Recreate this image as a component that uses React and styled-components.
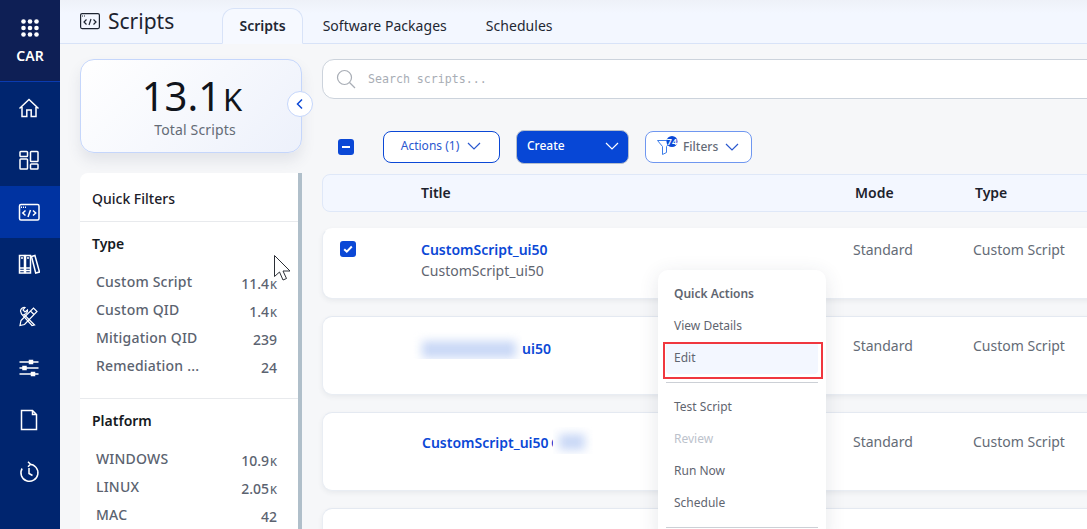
import React from 'react'
import styled, { createGlobalStyle } from 'styled-components'

const GlobalStyle = createGlobalStyle`
  html, body {
    margin: 0;
    padding: 0;
    height: 100%;
    overflow: hidden;
    background: #f6f7f9;
    font-family: 'Noto Sans', 'Open Sans', sans-serif;
  }
  *, *::before, *::after { box-sizing: border-box; }
`

const AppWrapper = styled.div`
  display: grid;
  grid-template-columns: 60px 1fr;
  width: 1087px;
  height: 529px;
  overflow: hidden;
  position: relative;
`

const Sidebar = styled.nav`
  display: flex;
  flex-direction: column;
  background: #00256f;
  height: 529px;
`

const Brand = styled.div`
  height: 82px;
  background: #0e1f55;
  border-bottom: 1px solid #0a3bb0;
  display: flex;
  flex-direction: column;
  align-items: center;
  padding-top: 19px;
  gap: 10px;
  color: #fff;
  font-size: 14px;
  font-weight: 600;
  line-height: 18px;
`

const NavItem = styled.div`
  height: 52px;
  padding-right: 2px;
  display: flex;
  align-items: center;
  justify-content: center;
  background: ${({ $active }) => ($active ? '#0033a1' : 'transparent')};
  color: #fff;
`

const Main = styled.div`
  display: flex;
  flex-direction: column;
  min-width: 0;
`

const Header = styled.header`
  height: 44px;
  display: flex;
  align-items: flex-end;
  padding-left: 20px;
  background: linear-gradient(180deg, #eef1f8 0%, #f3f7ff 30%);
  border-bottom: 1px solid #d8e3f8;
`

const PageTitle = styled.div`
  width: 142px;
  align-self: flex-start;
  height: 43px;
  display: flex;
  align-items: flex-start;
  gap: 8px;
  padding-top: 6px;
  font-size: 21px;
  line-height: 30px;
  color: #1d2430;

  svg { margin-top: 7px; }
`

const Tabs = styled.div`
  display: flex;
  align-items: flex-end;
  height: 36px;
  margin-bottom: -1px;
`

const Tab = styled.div`
  height: 36px;
  padding: 0 ${({ $active }) => ($active ? '16.5px' : '18.5px')} 2px;
  display: flex;
  align-items: center;
  font-size: 14px;
  letter-spacing: ${({ $active }) => ($active ? '0' : '0.04px')};
  font-weight: ${({ $active }) => ($active ? 600 : 400)};
  color: #1f2733;
  background: ${({ $active }) => ($active ? '#f6f9ff' : 'transparent')};
  border: 1px solid ${({ $active }) => ($active ? '#d8e3f8' : 'transparent')};
  border-bottom: 1px solid ${({ $active }) => ($active ? '#f6f9ff' : 'transparent')};
  border-radius: 12px 12px 0 0;
`

const Body = styled.div`
  display: flex;
  gap: 20px;
  padding: 15px 0 0 20px;
  flex: 1;
  min-height: 0;
`

const LeftColumn = styled.aside`
  width: 222px;
  flex: none;
  display: flex;
  flex-direction: column;
  gap: 20px;
`

const TotalCard = styled.div`
  position: relative;
  height: 94px;
  display: flex;
  flex-direction: column;
  align-items: center;
  padding-top: 11px;
  border: 1px solid #c5d6fb;
  border-radius: 14px;
  background: linear-gradient(135deg, #ffffff 0%, #f6f8fd 50%, #edf1fb 100%);
  box-shadow: 0 8px 14px rgba(60, 70, 100, 0.1);
`

const TotalValue = styled.div`
  font-size: 40px;
  line-height: 50px;
  height: 50px;
  padding-left: 2px;
  color: #10141c;

  span { font-size: 31px; margin-left: 2px; }
`

const TotalLabel = styled.div`
  margin-left: 8px;
  font-size: 14px;
  line-height: 18px;
  letter-spacing: 0.15px;
  color: #646b76;
`

const CollapseButton = styled.div`
  position: absolute;
  right: -12px;
  top: 31px;
  width: 26px;
  height: 26px;
  border-radius: 50%;
  display: flex;
  align-items: center;
  justify-content: center;
  background: #fff;
  border: 1px solid #c5d6fb;
  color: #0b48d6;
`

const FilterPanel = styled.div`
  flex: 1;
  min-height: 0;
  overflow: hidden;
  background: #fff;
  border-right: 4px solid #b0bfca;
  border-radius: 8px 0 0 0;
`

const FilterTitle = styled.div`
  height: 49px;
  padding: 16px 12px 0;
  font-size: 14px;
  line-height: 20px;
  font-weight: 500;
  color: #1b2029;
  border-bottom: 1px solid #e8eaed;
`

const FilterSection = styled.section`
  height: ${({ $height }) => $height};
  padding: 12px 12px 0;
  border-bottom: 1px solid #e8eaed;

  &:last-child { border-bottom: none; }
`

const FilterHeading = styled.div`
  font-size: 14px;
  line-height: 20px;
  font-weight: 600;
  color: #151a22;
  margin-bottom: 18px;
`

const FilterRow = styled.div`
  display: flex;
  justify-content: space-between;
  height: 28px;
  padding: 0 9px 0 4px;
  font-size: 14px;
  line-height: 20px;
  font-weight: 500;
  letter-spacing: 0.2px;
  color: #5b6370;
`

const FilterCount = styled.span`
  margin-top: 2px;
  letter-spacing: 0;

  small { font-size: 11px; margin-left: 1px; }
`

const RightColumn = styled.div`
  flex: 1;
  min-width: 0;
  display: flex;
  flex-direction: column;
`

const SearchBar = styled.div`
  height: 40px;
  width: 780px;
  display: flex;
  align-items: center;
  gap: 12px;
  padding-left: 13px;
  background: #fff;
  border: 1px solid #ccd3dc;
  border-radius: 12px;
  font-family: 'DejaVu Sans Mono', monospace;
  font-size: 11.6px;
  color: #a8adb5;
`

const Toolbar = styled.div`
  display: flex;
  align-items: center;
  height: 33px;
  margin-top: 31px;
  padding-left: 16px;
`

const SelectBox = styled.div`
  width: 16px;
  height: 16px;
  border-radius: 3px;
  flex: none;
  background: #0b48d6;
  display: flex;
  align-items: center;
  justify-content: center;
`

const ActionButton = styled.div`
  width: 117px;
  height: 32px;
  margin-left: 29px;
  padding-bottom: 2px;
  display: flex;
  align-items: center;
  justify-content: center;
  gap: 7px;
  border: 1px solid #0b48d6;
  border-radius: 8px;
  background: #fff;
  color: #2a58cf;
  font-size: 12px;
`

const CreateButton = styled.div`
  width: 113px;
  height: 34px;
  margin-left: 16px;
  display: flex;
  align-items: center;
  justify-content: space-between;
  padding: 0 8px 2px 10px;
  border: 1px solid #b6bfcc;
  border-radius: 8px;
  background: #0747d6;
  color: #fff;
  font-size: 12px;
  font-weight: 500;
`

const FilterButton = styled.div`
  width: 107px;
  height: 32px;
  margin-left: 16px;
  display: flex;
  align-items: center;
  padding-left: 11px;
  border: 1px solid #6f97f0;
  border-radius: 8px;
  background: #fff;
  color: #646b76;
  font-size: 12px;
  font-weight: 500;

  svg:last-child { margin-left: 6px; }
`

const FilterLabel = styled.span`
  margin-left: 5px;
`

const TableHead = styled.div`
  display: grid;
  grid-template-columns: 98px 434px 120px 1fr;
  align-items: center;
  width: 780px;
  height: 38px;
  margin-top: 11px;
  padding-bottom: 2px;
  background: #f3f7ff;
  border: 1px solid #dfe8f8;
  border-radius: 8px;
  font-size: 14px;
  font-weight: 600;
  color: #1c222c;
`

const Rows = styled.div`
  display: flex;
  flex-direction: column;
  gap: 17px;
  margin-top: 16px;
`

const Row = styled.div`
  display: grid;
  grid-template-columns: 98px 432px 120px 1fr;
  width: 780px;
  height: ${({ $height }) => $height};
  padding-top: ${({ $first }) => ($first ? '11px' : '19px')};
  background: #fff;
  border: 1px solid #e9edf3;
  border-top-color: ${({ $first }) => ($first ? 'transparent' : '#e4e9f1')};
  border-radius: 10px;
  box-shadow: 0 2px 5px rgba(60, 70, 90, 0.07);
  font-size: 14px;
  line-height: 20px;
  color: #646b76;
`

const CheckCell = styled.div`
  padding: 1px 0 0 17px;
`

const ScriptTitle = styled.div`
  position: relative;
  font-weight: 600;
  color: #0b48d6;
  margin-left: ${({ $offset }) => $offset || 0};
  margin-top: ${({ $drop }) => $drop || 0};
`

const ScriptSub = styled.div`
  margin-top: 1px;
  color: #5f6570;
`

// the reference hides part of the names behind a blurred, hard edged patch
const BlurPatch = styled.span`
  position: absolute;
  overflow: hidden;
  background: #fff;
  top: ${({ $top }) => $top};
  left: ${({ $left }) => $left};
  width: ${({ $width }) => $width};
  height: ${({ $height }) => $height};
`

const BlurCore = styled.span`
  position: absolute;
  inset: ${({ $inset }) => $inset};
  background: #c9d8f6;
  filter: blur(5px);
`

const ActionMenu = styled.div`
  position: absolute;
  left: 658px;
  top: 270px;
  width: 168px;
  height: 275px;
  padding: 8px 8px 0;
  background: #fff;
  border-radius: 10px;
  box-shadow: 0 4px 20px rgba(50, 60, 80, 0.12);
  font-size: 12px;
  color: #5f6570;
`

const MenuHeading = styled.div`
  height: 32px;
  padding: 8px 8px 0;
  font-weight: 600;
  line-height: 16px;
`

const MenuItem = styled.div`
  position: relative;
  height: 32px;
  padding: 0 8px 1px;
  display: flex;
  align-items: center;
  border-radius: 4px;
  color: ${({ $disabled }) => ($disabled ? '#bcc2cc' : '#5f6570')};
  background: ${({ $hover }) => ($hover ? '#f3f7ff' : 'transparent')};

  ${({ $hover }) =>
    $hover &&
    `&::after {
      content: '';
      position: absolute;
      left: -3px;
      top: 0;
      width: 160px;
      height: 37px;
      border: 2px solid #f0373f;
    }`}
`

const MenuDivider = styled.div`
  height: 1px;
  background: #ccd0d6;
  margin: ${({ $margin }) => $margin};
`

const Pointer = styled.svg`
  position: absolute;
  left: 273px;
  top: 254px;
`

const Chevron = ({ color = 'currentColor', size = 16 }) => (
  <svg width={size} height={size} viewBox="0 0 16 16" fill="none" stroke={color} strokeWidth="1.2">
    <path d="M2 5l6 6 6-6" />
  </svg>
)

const navIcons = [
  <path key="home" d="M1.500 11.500L11 2.500l9.500 9M4 10v9.500h4.800V13h4.400v6.500H18V10" />,
  <g key="dash"><rect x="2" y="2.500" width="7.500" height="5" rx=".8" /><rect x="2" y="10" width="7.500" height="10" rx=".8" /><rect x="12.500" y="2.500" width="7.500" height="10" rx=".8" /><rect x="12.500" y="15" width="7.500" height="5" rx=".8" /></g>,
  <g key="code"><rect x="1.500" y="3.500" width="19.500" height="15.500" rx="1.500" /><path d="M3 6.300h5" strokeDasharray="1 1" /><path d="M7.500 9.500L4.800 12l2.700 2.500M15 9.500l2.700 2.500-2.700 2.500M12.500 9l-2.500 7" /></g>,
  <g key="library"><rect x="1.500" y="2.500" width="5" height="17.500" /><rect x="7.500" y="2.500" width="5" height="17.500" /><path d="M13.500 3.500l3.400-1L21.500 19l-3.800 1zM1.500 15h11M1.500 17.500h11M3 5h2M9 5h2" /></g>,
  <g key="tools" strokeWidth="1.2"><path d="M3 15.500L15.500 3l3.500 3.500L6.500 19.500l-4.500 1zM12.500 6l3.500 3.500" /><path d="M2.500 6a4 4 0 0 1 4.500-3.500l-2 2.500 2 2 2.500-2a4 4 0 0 1-3.500 4.500l10.500 10.500-2.500 0.500L3.500 9z" /></g>,
  <g key="sliders"><path d="M1.500 5h19M1.500 11h19M1.500 17h19" /><rect x="11.500" y="3.500" width="3" height="3" fill="currentColor" /><rect x="5" y="9.500" width="3" height="3" fill="currentColor" /><rect x="13.500" y="15.500" width="3" height="3" fill="currentColor" /></g>,
  <g key="file"><path d="M3.500 1.500h11l4 4V20.500h-15zM14.500 1.500v4h4" /></g>,
  <g key="clock"><path d="M11.500 3.300a8.500 8.500 0 1 1-7.400 4.200M10 .8l2.500 2.500L10 5.800" /><path d="M11 7v5.500l3.500 2" /></g>,
]

const NavIcon = ({ index }) => (
  <svg width="22" height="22" viewBox="0 0 22 22" fill="none" stroke="currentColor" strokeWidth="1.5">
    {navIcons[index]}
  </svg>
)

const BrandDots = () => (
  <svg width="18" height="18" viewBox="0 0 18 18" fill="#fff">
    {[2.5, 9, 15.5].flatMap((y) => [2.5, 9, 15.5].map((x) => <circle key={`${x}-${y}`} cx={x} cy={y} r="2.3" />))}
  </svg>
)

const ScriptsIcon = () => (
  <svg width="20" height="17" viewBox="0 0 20 17" fill="none" stroke="#1d2430" strokeWidth="1.2">
    <rect x=".6" y=".6" width="18.800" height="15" rx="1.500" />
    <path d="M2 3h4" strokeDasharray="1 1" />
    <path d="M6.500 6.500L4 9l2.500 2.500M13.500 6.500L16 9l-2.500 2.500M11 6l-2 6" />
  </svg>
)

const CheckBox = () => (
  <SelectBox>
    <svg width="10" height="10" viewBox="0 0 10 10" fill="none" stroke="#fff" strokeWidth="2">
      <path d="M1.200 5.200l2.600 2.500 5-5.200" />
    </svg>
  </SelectBox>
)

const typeFilters = [
  ['Custom Script', '11.4', 'K'],
  ['Custom QID', '1.4', 'K'],
  ['Mitigation QID', '239', ''],
  ['Remediation ...', '24', ''],
]

const platformFilters = [
  ['WINDOWS', '10.9', 'K'],
  ['LINUX', '2.05', 'K'],
  ['MAC', '42', ''],
]

const FilterList = ({ items }) =>
  items.map(([label, value, unit]) => (
    <FilterRow key={label}>
      <span>{label}</span>
      <FilterCount>
        {value}
        {unit && <small>{unit}</small>}
      </FilterCount>
    </FilterRow>
  ))

export default function App() {
  return (
    <>
      <GlobalStyle />
      <AppWrapper>
        <Sidebar>
          <Brand>
            <BrandDots />
            CAR
          </Brand>
          {navIcons.map((_, i) => (
            <NavItem key={i} $active={i === 2}>
              <NavIcon index={i} />
            </NavItem>
          ))}
        </Sidebar>
        <Main>
          <Header>
            <PageTitle>
              <ScriptsIcon />
              Scripts
            </PageTitle>
            <Tabs>
              <Tab $active>Scripts</Tab>
              <Tab>Software Packages</Tab>
              <Tab>Schedules</Tab>
            </Tabs>
          </Header>
          <Body>
            <LeftColumn>
              <TotalCard>
                <TotalValue>
                  13.1<span>K</span>
                </TotalValue>
                <TotalLabel>Total Scripts</TotalLabel>
                <CollapseButton>
                  <svg width="12" height="12" viewBox="0 0 12 12" fill="none" stroke="currentColor" strokeWidth="1.5">
                    <path d="M8 1.500L3.500 6 8 10.500" />
                  </svg>
                </CollapseButton>
              </TotalCard>
              <FilterPanel>
                <FilterTitle>Quick Filters</FilterTitle>
                <FilterSection $height="177px">
                  <FilterHeading>Type</FilterHeading>
                  <FilterList items={typeFilters} />
                </FilterSection>
                <FilterSection $height="140px">
                  <FilterHeading>Platform</FilterHeading>
                  <FilterList items={platformFilters} />
                </FilterSection>
              </FilterPanel>
            </LeftColumn>
            <RightColumn>
              <SearchBar>
                <svg width="20" height="20" viewBox="0 0 20 20" fill="none" stroke="#a8adb5" strokeWidth="1.2">
                  <circle cx="8.500" cy="8.500" r="7" />
                  <path d="M13.500 13.500l5.500 5.500" />
                </svg>
                Search scripts...
              </SearchBar>
              <Toolbar>
                <SelectBox>
                  <svg width="10" height="10" viewBox="0 0 10 10" stroke="#fff" strokeWidth="2">
                    <path d="M1 5h8" />
                  </svg>
                </SelectBox>
                <ActionButton>
                  Actions (1)
                  <Chevron color="#2a58cf" />
                </ActionButton>
                <CreateButton>
                  Create
                  <Chevron color="#fff" />
                </CreateButton>
                <FilterButton>
                  <svg width="21" height="22" viewBox="0 0 21 22">
                    <path d="M.5 4.500h14L9.500 10.500V16.500l-4 2v-8z" fill="none" stroke="#3f7ee8" strokeWidth="1" />
                    <circle cx="15" cy="5.500" r="5.500" fill="#0b48d6" />
                    <text x="15" y="8.800" fontSize="9" fontWeight="600" fill="#fff" textAnchor="middle">74</text>
                  </svg>
                  <FilterLabel>Filters</FilterLabel>
                  <Chevron color="#2a58cf" />
                </FilterButton>
              </Toolbar>
              <TableHead>
                <span />
                <span>Title</span>
                <span>Mode</span>
                <span>Type</span>
              </TableHead>
              <Rows>
                <Row $height="71px" $first>
                  <CheckCell>
                    <CheckBox />
                  </CheckCell>
                  <div>
                    <ScriptTitle>CustomScript_ui50</ScriptTitle>
                    <ScriptSub>CustomScript_ui50</ScriptSub>
                  </div>
                  <span>Standard</span>
                  <span>Custom Script</span>
                </Row>
                <Row $height="79px">
                  <span />
                  <ScriptTitle $offset="101px" $drop="3px">
                    <BlurPatch $top="-10px" $left="-110px" $width="110px" $height="30px">
                      <BlurCore $inset="12px 6px 1px 10px" />
                    </BlurPatch>
                    ui50
                  </ScriptTitle>
                  <span>Standard</span>
                  <span>Custom Script</span>
                </Row>
                <Row $height="79px">
                  <span />
                  <ScriptTitle $offset="1px" $drop="1px">
                    {'CustomScript_ui50\u2009C'}
                    <BlurPatch $top="-6px" $left="131px" $width="40px" $height="27px">
                      <BlurCore $inset="7px 8px 4px 6px" />
                    </BlurPatch>
                  </ScriptTitle>
                  <span>Standard</span>
                  <span>Custom Script</span>
                </Row>
                <Row $height="40px" />
              </Rows>
            </RightColumn>
          </Body>
        </Main>
        <ActionMenu>
          <MenuHeading>Quick Actions</MenuHeading>
          <MenuItem>View Details</MenuItem>
          <MenuItem $hover>Edit</MenuItem>
          <MenuDivider $margin="8px 0" />
          <MenuItem>Test Script</MenuItem>
          <MenuItem $disabled>Review</MenuItem>
          <MenuItem>Run Now</MenuItem>
          <MenuItem>Schedule</MenuItem>
          <MenuDivider $margin="8px 0" />
        </ActionMenu>
        <Pointer width="20" height="29" viewBox="0 0 20 29" fill="#fff" stroke="#2b2f36" strokeWidth="1">
          <path d="M1.500 1.500v21l5-4.500 3.500 8 3.500-1.500-3.500-7.500h7z" />
        </Pointer>
      </AppWrapper>
    </>
  )
}
